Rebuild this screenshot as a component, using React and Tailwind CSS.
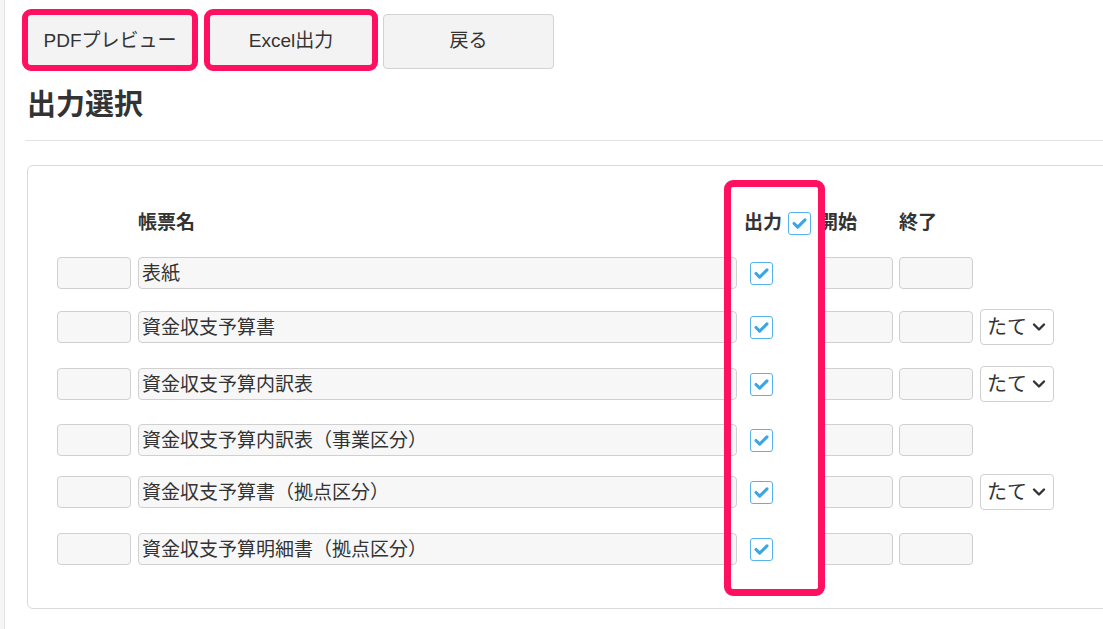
const rows = [
  { name: "表紙", select: false, gap: "mt-[14px]" },
  { name: "資金収支予算書", select: true, gap: "mt-[18px]" },
  { name: "資金収支予算内訳表", select: true, gap: "mt-[21px]" },
  { name: "資金収支予算内訳表（事業区分）", select: false, gap: "mt-[20px]" },
  { name: "資金収支予算書（拠点区分）", select: true, gap: "mt-[16px]" },
  { name: "資金収支予算明細書（拠点区分）", select: false, gap: "mt-[21px]" },
];

function CheckBox() {
  return (
    <div className="w-[23px] h-[23px] border border-[#55b2ea] rounded-[3px] bg-white flex items-center justify-center">
      <svg width="23" height="23" viewBox="0 0 23 23" fill="none">
        <polyline
          points="5.5,11.5 9.5,15.5 17.5,7.5"
          stroke="#3aa6e6"
          strokeWidth="3.4"
          strokeLinecap="round"
          strokeLinejoin="round"
        />
      </svg>
    </div>
  );
}

function Field({ className = "", children }) {
  return (
    <div
      className={`h-[32px] bg-[#f7f7f7] border border-[#d0d0d0] rounded-[4px] flex items-center px-[3px] text-[19px] text-[#333] leading-none ${className}`}
    >
      {children}
    </div>
  );
}

export default function App() {
  return (
    <div
      className="relative flex min-h-[629px] bg-white overflow-hidden"
      style={{ fontFamily: '"Liberation Sans", "Noto Sans CJK JP", sans-serif' }}
    >
      {/* left rail */}
      <div className="w-[5px] shrink-0 bg-[#f4f5f7] border-r border-[#e4e4e4]" />

      <div className="flex-1 pl-[22px] pt-[14px]">
        {/* action buttons */}
        <div className="flex items-start">
          <button className="w-[166px] h-[55px] bg-[#f3f3f3] border border-[#d2d2d2] rounded-[4px] text-[19px] text-[#333]">
            PDFプレビュー
          </button>
          <button className="ml-[16px] w-[164px] h-[55px] bg-[#f3f3f3] border border-[#d2d2d2] rounded-[4px] text-[19px] text-[#333]">
            Excel出力
          </button>
          <button className="ml-[10px] w-[171px] h-[55px] bg-[#f3f3f3] border border-[#d2d2d2] rounded-[4px] text-[19px] text-[#333]">
            戻る
          </button>
        </div>

        <h1 className="mt-[19px] text-[29px] font-bold text-[#333] leading-[35px]">出力選択</h1>
        <div className="mt-[17px] -ml-[2px] border-t border-[#e3e3e3]" />

        {/* output table card */}
        <div className="mt-[24px] w-[1120px] border border-[#d9d9d9] rounded-[6px] pl-[29px] pt-[39px] pb-[41px]">
          <div className="flex items-center h-[36px] font-bold text-[19px] text-[#333]">
            <div className="w-[81px]" />
            <div className="w-[599px]">帳票名</div>
            <div className="w-[82px] pl-[7px] flex items-center gap-[6px]">
              <span>出力</span>
              <CheckBox />
            </div>
            <div className="w-[80px]">開始</div>
            <div className="w-[80px]">終了</div>
          </div>

          {rows.map((r) => (
            <div key={r.name} className={`flex items-center h-[36px] ${r.gap}`}>
              <Field className="w-[74px]" />
              <Field className="ml-[7px] w-[599px]">{r.name}</Field>
              <div className="w-[82px] pl-[13px]">
                <CheckBox />
              </div>
              <Field className="w-[74px]" />
              <Field className="ml-[6px] w-[74px]" />
              {r.select && (
                <div className="ml-[7px] w-[74px] h-[36px] bg-white border border-[#d0d0d0] rounded-[4px] flex items-center justify-between pl-[6px] pr-[7px] text-[20px] text-[#333]">
                  <span>たて</span>
                  <svg width="14" height="14" viewBox="0 0 14 14" fill="none">
                    <polyline
                      points="2,4.5 7,9.5 12,4.5"
                      stroke="#333"
                      strokeWidth="2.4"
                      strokeLinecap="round"
                      strokeLinejoin="round"
                    />
                  </svg>
                </div>
              )}
            </div>
          ))}
        </div>
      </div>

      {/* highlight annotations */}
      <div className="absolute left-[22px] top-[9px] w-[176px] h-[62px] border-[6px] border-[#ff1060] rounded-[9px] pointer-events-none" />
      <div className="absolute left-[204px] top-[9px] w-[174px] h-[62px] border-[6px] border-[#ff1060] rounded-[9px] pointer-events-none" />
      <div className="absolute left-[724px] top-[180px] w-[101px] h-[416px] border-[7px] border-[#ff1060] rounded-[9px] pointer-events-none" />
    </div>
  );
}
